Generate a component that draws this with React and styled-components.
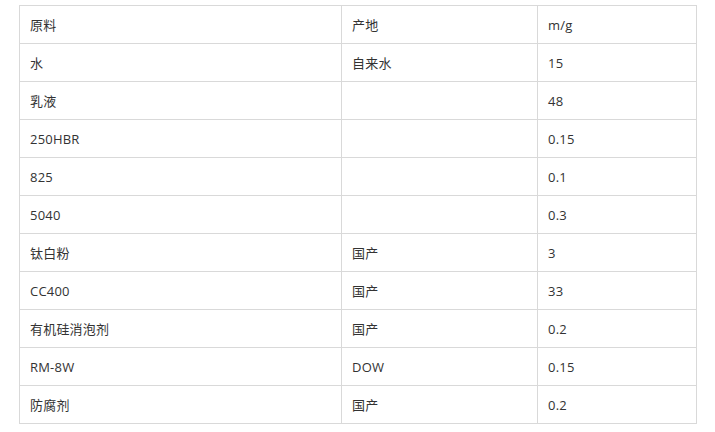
import React from "react";
import styled, { createGlobalStyle } from "styled-components";

const Global = createGlobalStyle`
  html, body { margin: 0; padding: 0; background: #fff; }
  body { font-family: "Open Sans", "Noto Sans CJK SC", sans-serif; }
`;

const Page = styled.div`
  padding: 5px 0 0 19px;
  width: 715px;
  box-sizing: border-box;
`;

const Table = styled.table`
  border-collapse: collapse;
  table-layout: fixed;
  width: 677px;
`;

const Col = styled.col`
  width: ${(p) => p.$w}px;
`;

const Cell = styled.td`
  border: 1px solid #d9d9d9;
  height: 38px;
  box-sizing: border-box;
  padding: 0 10px;
  font-size: 13px;
  letter-spacing: 0.2px;
  color: #333;
  vertical-align: middle;
  line-height: 18px;
`;

const rows = [
  ["原料", "产地", "m/g"],
  ["水", "自来水", "15"],
  ["乳液", "", "48"],
  ["250HBR", "", "0.15"],
  ["825", "", "0.1"],
  ["5040", "", "0.3"],
  ["钛白粉", "国产", "3"],
  ["CC400", "国产", "33"],
  ["有机硅消泡剂", "国产", "0.2"],
  ["RM-8W", "DOW", "0.15"],
  ["防腐剂", "国产", "0.2"],
];

export default function App() {
  return (
    <Page>
      <Global />
      <Table>
        <colgroup>
          <Col $w={322} />
          <Col $w={196} />
          <Col $w={159} />
        </colgroup>
        <tbody>
          {rows.map((r, i) => (
            <tr key={i}>
              {r.map((c, j) => (
                <Cell key={j}>{c}</Cell>
              ))}
            </tr>
          ))}
        </tbody>
      </Table>
    </Page>
  );
}
